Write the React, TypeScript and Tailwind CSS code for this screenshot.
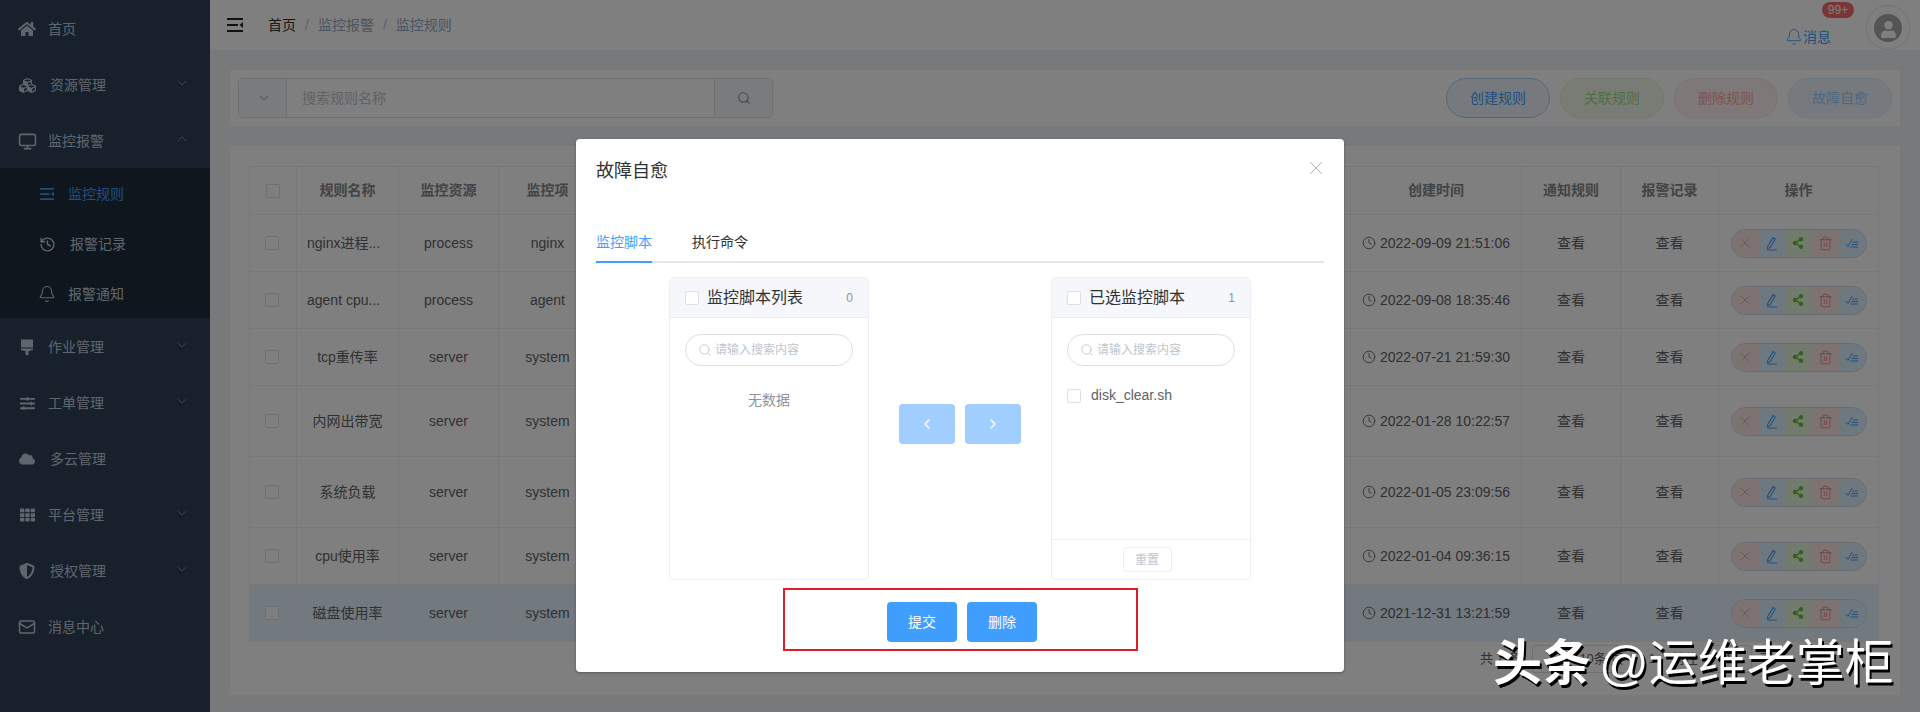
import React from "react";
import { Bell, ChevronDown, ChevronLeft, ChevronRight, ChevronUp, Clock, History, Mail, Monitor, Search, Trash2, X } from "lucide-react";
import { FaCloud, FaCubes, FaHome, FaShareAlt, FaShieldAlt, FaSlidersH, FaTh, FaUser } from "react-icons/fa";

const Rules = ({ className }: { className?: string }) => (
  <svg viewBox="0 0 16 14" className={className} fill="currentColor">
    <rect x="0" y="0" width="16" height="2" />
    <rect x="0" y="6" width="11" height="2" />
    <rect x="0" y="12" width="16" height="2" />
    <path d="M16 4 L12.5 7 L16 10 Z" />
  </svg>
);
const Brush = ({ className }: { className?: string }) => (
  <svg viewBox="0 0 14 16" className={className} fill="currentColor">
    <path d="M1 0h12v8H1z" />
    <path d="M1 9h12v1.5l-3.5 1H8.5V15l-1.500 1-1.500-1v-3.500H4.500L1 10.500z" />
  </svg>
);
const Pen = ({ className }: { className?: string }) => (
  <svg viewBox="0 0 14 14" className={className} fill="none" stroke="currentColor" strokeWidth="1">
    <path d="M3.500 9.500 8.500 1.500l2 1.300L5.800 10.800l-2.600.800z" />
    <path d="M3 13h9" />
  </svg>
);
const CheckList = ({ className }: { className?: string }) => (
  <svg viewBox="0 0 14 14" className={className} fill="none" stroke="currentColor" strokeWidth="1">
    <path d="M1 8l2 2.500L7 3" />
    <path d="M7.500 6H13M6.500 8.500H13M5.500 11H13" />
  </svg>
);

const Box = ({ className = "" }: { className?: string }) => (
  <span className={`block h-3.5 w-3.5 rounded-[2px] border border-[#dcdfe6] bg-white ${className}`} />
);

type MenuProps = { icon: React.ReactNode; label: string; arrow?: "down" | "up"; gap?: string };
const MenuItem = ({ icon, label, arrow, gap = "gap-[14px]" }: MenuProps) => (
  <div className="flex h-14 items-center pl-5 pr-[20px] pt-[2px] text-[14px] text-[#bfcbd9]">
    <span className={`flex items-center ${gap}`}>
      <span className="flex w-3.5 justify-center">{icon}</span>
      <span>{label}</span>
    </span>
    {arrow === "down" && <ChevronDown className="mb-[4px] ml-auto h-4 w-4 text-[#909399]" strokeWidth={1.250} />}
    {arrow === "up" && <ChevronUp className="mb-[4px] ml-auto h-4 w-4 text-[#909399]" strokeWidth={1.250} />}
  </div>
);
const SubItem = ({ icon, label, active, gap = "gap-[14px]" }: { icon: React.ReactNode; label: string; active?: boolean; gap?: string }) => (
  <div className={`flex h-[50px] items-center pl-10 pt-[2px] text-[14px] ${gap} ${active ? "text-[#409eff]" : "text-[#bfcbd9]"}`}>
    <span className="flex w-3.5 justify-center">{icon}</span>
    <span>{label}</span>
  </div>
);

const Sidebar = () => (
  <aside className="w-[210px] shrink-0 bg-[#304156]">
    <MenuItem icon={<FaHome className="h-[18px] w-[18px] shrink-0" />} label="首页" />
    <MenuItem icon={<FaCubes className="h-[17px] w-[17px] shrink-0" />} label="资源管理" arrow="down" gap="gap-[16px]" />
    <MenuItem icon={<Monitor className="h-[19px] w-[19px] shrink-0" strokeWidth={2} />} label="监控报警" arrow="up" />
    <div className="bg-[#1f2d3d]">
      <SubItem active icon={<Rules className="h-3 w-3.5 shrink-0" />} label="监控规则" />
      <SubItem icon={<History className="h-[17px] w-[17px] shrink-0" />} label="报警记录" gap="gap-4" />
      <SubItem icon={<Bell className="h-[18px] w-[18px] shrink-0" strokeWidth={1.500} />} label="报警通知" />
    </div>
    <MenuItem icon={<Brush className="h-[17px] w-3.5 shrink-0" />} label="作业管理" arrow="down" />
    <MenuItem icon={<FaSlidersH className="h-[15px] w-[15px] shrink-0" />} label="工单管理" arrow="down" />
    <MenuItem icon={<FaCloud className="h-4 w-4 shrink-0" />} label="多云管理" gap="gap-[16px]" />
    <MenuItem icon={<FaTh className="h-4 w-[15px] shrink-0" />} label="平台管理" arrow="down" />
    <MenuItem icon={<FaShieldAlt className="h-4 w-4 shrink-0" />} label="授权管理" arrow="down" gap="gap-[16px]" />
    <MenuItem icon={<Mail className="h-[18px] w-[18px] shrink-0" />} label="消息中心" />
  </aside>
);

const Header = () => (
  <header className="flex h-[50px] items-center bg-white pl-[17px] pr-[10px]">
    <Rules className="h-3.5 w-4 text-[#222]" />
    <div className="ml-[25px] flex items-center gap-[9px] text-[14px] text-[#97a8be]">
      <span className="text-[#303133]">首页</span>
      <span className="text-[#c0c4cc]">/</span>
      <span>监控报警</span>
      <span className="text-[#c0c4cc]">/</span>
      <span>监控规则</span>
    </div>
    <div className="relative ml-auto mt-6 flex items-center text-[14px] text-[#409eff]">
      <Bell className="h-[18px] w-[18px]" strokeWidth={1.250} />
      <span>消息</span>
      <span className="absolute -right-[23px] -top-[25px] flex h-4 w-8 items-center justify-center rounded-full bg-[#f56c6c] text-[12px] text-white">99+</span>
    </div>
    <div className="ml-[35px] mt-[5px] flex h-[45px] w-[44px] items-center justify-center rounded-full border border-[#e6e6e6]">
      <span className="flex h-[28px] w-[28px] items-end justify-center overflow-hidden rounded-full bg-[#a6a8ac] pb-1 text-white">
        <FaUser className="h-[17px] w-[17px]" />
      </span>
    </div>
  </header>
);

const pillClasses = {
  blue: "border-[#a9cff5] bg-[#ecf5ff] text-[#409eff]",
  green: "border-[#e1f3d8] bg-[#f0f9eb] text-[#a4da89]",
  red: "border-[#fde2e2] bg-[#fef0f0] text-[#f9a7a7]",
  pale: "border-[#d9ecff] bg-[#ecf5ff] text-[#a0cfff]",
};
const Pill = ({ tone, label }: { tone: keyof typeof pillClasses; label: string }) => (
  <button className={`h-10 w-[104px] rounded-full border text-[14px] ${pillClasses[tone]}`}>{label}</button>
);

const SearchBar = () => (
  <section className="mt-5 flex h-14 items-center bg-white pl-2 pr-2">
    <div className="flex h-10 w-[535px] rounded border border-[#dcdfe6] bg-white">
      <div className="flex w-[48px] items-center justify-end border-r border-[#dcdfe6] bg-[#f5f7fa] pr-3.5 text-[#c0c4cc]">
        <ChevronDown className="h-4 w-4" />
      </div>
      <div className="flex flex-1 items-center pl-[15px] text-[14px] text-[#c0c4cc]">搜索规则名称</div>
      <div className="flex w-[58px] items-center justify-center border-l border-[#dcdfe6] bg-[#f5f7fa] text-[#909399]">
        <Search className="h-3.5 w-3.5" />
      </div>
    </div>
    <div className="ml-auto flex gap-2.5">
      <Pill tone="blue" label="创建规则" />
      <Pill tone="green" label="关联规则" />
      <Pill tone="red" label="删除规则" />
      <Pill tone="pale" label="故障自愈" />
    </div>
  </section>
);

const Ops = () => (
  <div className="mx-auto flex h-[29px] w-[136px] overflow-hidden rounded-full border border-[#c9d6e4]">
    <span className="flex w-[27px] items-center justify-center bg-[#fde6e6] text-[#f08a8a]"><X className="h-4 w-4" strokeWidth={1} /></span>
    <span className="flex w-[26px] items-center justify-center bg-[#dfefff] text-[#409eff]"><Pen className="h-[15px] w-[15px]" /></span>
    <span className="flex w-[27px] items-center justify-center bg-[#e6f5dd] text-[#67c23a]"><FaShareAlt className="h-3 w-3" /></span>
    <span className="flex w-[27px] items-center justify-center bg-[#fde6e6] text-[#f56c6c]"><Trash2 className="h-[15px] w-[15px]" strokeWidth={1.250} /></span>
    <span className="flex flex-1 items-center justify-center bg-[#dfefff] text-[#409eff]"><CheckList className="h-3.5 w-3.5" /></span>
  </div>
);

const rows = [
  { name: "nginx进程...", res: "process", item: "nginx", time: "2022-09-09 21:51:06", h: "h-[57px]", cut: true },
  { name: "agent cpu...", res: "process", item: "agent", time: "2022-09-08 18:35:46", h: "h-[57px]", cut: true },
  { name: "tcp重传率", res: "server", item: "system", time: "2022-07-21 21:59:30", h: "h-[57px]" },
  { name: "内网出带宽", res: "server", item: "system", time: "2022-01-28 10:22:57", h: "h-[71px]" },
  { name: "系统负载", res: "server", item: "system", time: "2022-01-05 23:09:56", h: "h-[71px]" },
  { name: "cpu使用率", res: "server", item: "system", time: "2022-01-04 09:36:15", h: "h-[57px]" },
  { name: "磁盘使用率", res: "server", item: "system", time: "2021-12-31 13:21:59", h: "h-[57px]", hl: true },
];

const DataTable = () => (
  <table className="w-[1630px] table-fixed border-separate border-spacing-0 border-l border-t border-[#ebeef5] text-center text-[14px] text-[#606266]">
    <colgroup>
      <col className="w-[47px]" />
      <col className="w-[102px]" />
      <col className="w-[100px]" />
      <col className="w-[98px]" />
      <col />
      <col className="w-[171px]" />
      <col className="w-[99px]" />
      <col className="w-[98px]" />
      <col className="w-[160px]" />
    </colgroup>
    <thead className="text-[#84878d]">
      <tr className="h-12 font-bold">
        <th className="border-b border-r border-[#ebeef5]"><Box className="mx-auto" /></th>
        <th className="border-b border-r border-[#ebeef5]">规则名称</th>
        <th className="border-b border-r border-[#ebeef5]">监控资源</th>
        <th className="border-b border-r border-[#ebeef5]">监控项</th>
        <th className="border-b border-r border-[#ebeef5]" />
        <th className="border-b border-r border-[#ebeef5]">创建时间</th>
        <th className="border-b border-r border-[#ebeef5]">通知规则</th>
        <th className="border-b border-r border-[#ebeef5]">报警记录</th>
        <th className="border-b border-r border-[#ebeef5]">操作</th>
      </tr>
    </thead>
    <tbody>
      {rows.map((r) => (
        <tr key={r.time} className={`${r.h} ${r.hl ? "bg-[#e4f2ff]" : ""}`}>
          <td className="border-b border-r border-[#ebeef5] pr-[3px]"><Box className="mx-auto" /></td>
          <td className={`border-b border-r border-[#ebeef5] ${r.cut ? "pl-2.5 text-left" : ""}`}>{r.name}</td>
          <td className="border-b border-r border-[#ebeef5]">{r.res}</td>
          <td className="border-b border-r border-[#ebeef5]">{r.item}</td>
          <td className="border-b border-r border-[#ebeef5]" />
          <td className="border-b border-r border-[#ebeef5]">
            <span className="flex items-center justify-center gap-1"><Clock className="h-3.5 w-3.5" strokeWidth={1.500} />{r.time}</span>
          </td>
          <td className="border-b border-r border-[#ebeef5]">查看</td>
          <td className="border-b border-r border-[#ebeef5]">查看</td>
          <td className="border-b border-r border-[#ebeef5]"><Ops /></td>
        </tr>
      ))}
    </tbody>
  </table>
);

const Pager = () => (
  <div className="mt-[3px] flex h-7 items-center pl-[1231px] text-[13px] text-[#606266]">
    <span>共 7 条</span>
    <span className="ml-3 flex h-7 w-[100px] items-center justify-end rounded-[3px] border border-[#dcdfe6] pr-2">10条/页</span>
    <span className="ml-4">1</span>
    <span className="ml-4">前往</span>
    <span className="ml-2 flex h-7 w-[46px] items-center justify-center rounded-[3px] border border-[#dcdfe6]">1</span>
    <span className="ml-2">页</span>
  </div>
);

const TablePanel = () => (
  <section className="mt-5 h-[549px] bg-white pl-[19px] pt-[20px]">
    <DataTable />
    <Pager />
  </section>
);

const Filter = () => (
  <div className="mx-[15px] mt-4 flex h-8 items-center gap-[3px] rounded-full border border-[#dcdfe6] pl-3 text-[12px] text-[#c0c4cc]">
    <Search className="h-3.5 w-3.5" strokeWidth={1.500} />
    <span>请输入搜索内容</span>
  </div>
);

const Panel = ({ title, count, children, footer }: { title: string; count: string; children?: React.ReactNode; footer?: boolean }) => (
  <div className="flex h-[303px] w-[200px] flex-col rounded border border-[#ebeef5] bg-white">
    <div className="flex h-10 shrink-0 items-center border-b border-[#ebeef5] bg-[#f5f7fa] pl-[15px] pr-[15px] text-[16px] text-[#303133]">
      <Box />
      <span className="ml-2">{title}</span>
      <span className="ml-auto text-[12px] text-[#909399]">{count}</span>
    </div>
    <Filter />
    <div className="flex-1">{children}</div>
    {footer && (
      <div className="flex h-[40px] items-center justify-center border-t border-[#ebeef5] pr-[8px]">
        <span className="flex h-[25px] w-[49px] items-center justify-center rounded-[3px] border border-[#ebeef5] text-[12px] text-[#c0c4cc]">重置</span>
      </div>
    )}
  </div>
);

const Dialog = () => (
  <div className="absolute left-[576px] top-[139px] h-[533px] w-[768px] rounded-sm bg-white shadow-[0_1px_3px_rgba(0,0,0,0.3)]">
    <div className="flex items-start justify-between px-5 pb-2.5 pt-5">
      <span className="text-[18px] leading-6 text-[#303133]">故障自愈</span>
      <X className="-mr-[3px] -mt-[2px] h-[22px] w-[22px] text-[#909399]" strokeWidth={0.800} />
    </div>
    <div className="px-5 pt-[30px]">
      <div className="flex h-10 gap-10 border-b-2 border-[#e4e7ed] text-[14px] text-[#303133]">
        <span className="-mb-[2px] flex items-center border-b-2 border-[#409eff] text-[#409eff]">监控脚本</span>
        <span className="flex items-center">执行命令</span>
      </div>
      <div className="mt-3.5 flex items-center justify-center">
        <Panel title="监控脚本列表" count="0">
          <div className="mt-[24px] text-center text-[14px] text-[#909399]">无数据</div>
        </Panel>
        <div className="mx-[30px] mb-2.5 flex gap-2.5">
          <span className="flex h-10 w-14 items-center justify-center rounded bg-[#a0cfff] text-white"><ChevronLeft className="h-4 w-4" /></span>
          <span className="flex h-10 w-14 items-center justify-center rounded bg-[#a0cfff] text-white"><ChevronRight className="h-4 w-4" /></span>
        </div>
        <Panel title="已选监控脚本" count="1" footer>
          <div className="mt-[19px] flex items-center gap-2.5 pl-[15px] text-[14px] text-[#606266]">
            <Box />
            <span>disk_clear.sh</span>
          </div>
        </Panel>
      </div>
      <div className="mt-[22px] flex justify-center gap-2.5 pl-1 text-[14px] text-white">
        <button className="h-10 w-[70px] rounded bg-[#409eff]">提交</button>
        <button className="h-10 w-[70px] rounded bg-[#409eff]">删除</button>
      </div>
    </div>
    <div className="absolute left-[207px] top-[449px] h-[63px] w-[355px] border-2 border-[#dc1f2a]" />
  </div>
);

export default function App() {
  return (
    <div className="relative flex h-[712px] w-[1920px] overflow-hidden bg-[#f0f2f5] font-['Liberation_Sans','Noto_Sans_CJK_SC',sans-serif]">
      <Sidebar />
      <main className="min-w-0 flex-1">
        <Header />
        <div className="pl-5 pr-5">
          <SearchBar />
          <TablePanel />
        </div>
      </main>
      <div className="absolute inset-0 bg-black/50" />
      <Dialog />
      <div className="absolute left-[1493px] top-[630px] whitespace-nowrap text-[49px] leading-[66px] text-white [text-shadow:2px_3px_0_#000]">
        <span className="font-bold">头条</span>
        <span className="ml-2">@运维老掌柜</span>
      </div>
    </div>
  );
}
